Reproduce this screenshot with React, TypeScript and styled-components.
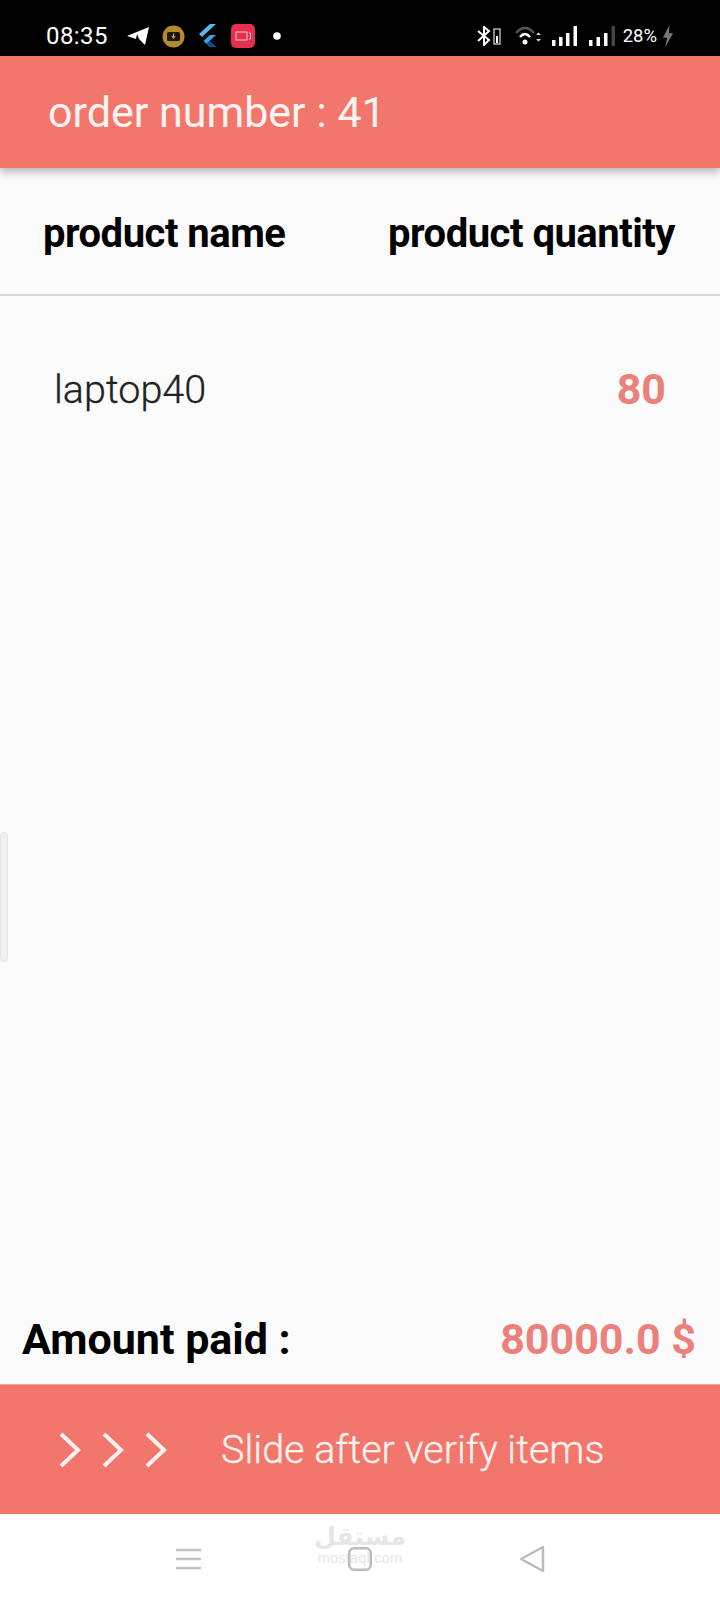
import type { FC } from 'react'
import styled, { createGlobalStyle } from 'styled-components'

const SALMON = '#f3766c'
const SALMON_TEXT = '#ec807a'

const GlobalStyle = createGlobalStyle`
  html, body {
    margin: 0;
    padding: 0;
    background: #fbfbfb;
    font-family: Roboto, "Liberation Sans", sans-serif;
  }
`

const Screen = styled.div`
  position: relative;
  width: 720px;
  height: 1600px;
  display: flex;
  flex-direction: column;
  overflow: hidden;
  background: #fbfbfb;
`

// ─── Status bar ───────────────────────────────────────────────────────────────

const StatusBar = styled.div`
  height: 56px;
  flex: none;
  background: #000;
  display: flex;
  align-items: center;
  justify-content: space-between;
  padding: 16px 46px 0 46px;
  box-sizing: border-box;
  color: #fff;
`

const StatusGroup = styled.div`
  display: flex;
  align-items: center;
`

const Clock = styled.span`
  font-size: 24px;
  letter-spacing: 0.4px;
  margin-right: 19px;
`

const BatteryText = styled.span`
  font-size: 18.5px;
  margin: 0 5px 0 0;
`

const NotifIcon = styled.svg<{ $gap?: number }>`
  display: block;
  flex: none;
  margin-right: ${({ $gap }) => $gap ?? 0}px;
`

// ─── Header ───────────────────────────────────────────────────────────────────

const AppBar = styled.header`
  height: 112px;
  flex: none;
  background: ${SALMON};
  display: flex;
  align-items: center;
  padding-left: 48px;
  box-shadow: 0 4px 8px rgba(0, 0, 0, 0.28);
  position: relative;
  z-index: 1;
`

const AppBarTitle = styled.h1`
  margin: 0;
  font-size: 43px;
  font-weight: 400;
  color: #fff4f2;
`

// ─── Table ────────────────────────────────────────────────────────────────────

const TableHead = styled.div`
  height: 128px;
  flex: none;
  display: flex;
  align-items: center;
  justify-content: space-between;
  padding: 4px 45px 0 43px;
  border-bottom: 2px solid #d6d6d6;
  box-sizing: border-box;
`

const HeadCell = styled.span`
  font-size: 40px;
  font-weight: 700;
  letter-spacing: -0.5px;
  color: #000;
`

const ItemRow = styled.div`
  flex: none;
  display: flex;
  align-items: center;
  justify-content: space-between;
  padding: 68px 54px 0 54px;
`

const ItemName = styled.span`
  font-size: 39.5px;
  font-weight: 300;
  color: #222;
  -webkit-text-stroke: 0.3px #222;
`

const ItemQty = styled.span`
  font-size: 43px;
  font-weight: 700;
  color: ${SALMON_TEXT};
`

const Spacer = styled.div`
  flex: 1;
`

// ─── Footer ───────────────────────────────────────────────────────────────────

const AmountRow = styled.div`
  height: 86px;
  flex: none;
  display: flex;
  align-items: center;
  justify-content: space-between;
  padding: 0 24px 4px 22px;
  box-sizing: border-box;
`

const AmountLabel = styled.span`
  font-size: 43px;
  font-weight: 700;
  color: #000;
`

const AmountValue = styled.span`
  font-size: 43px;
  font-weight: 700;
  color: ${SALMON_TEXT};
`

const SlideBar = styled.div`
  height: 130px;
  flex: none;
  background: ${SALMON};
  border-top: 1px solid #f3a7a1;
  box-sizing: border-box;
  display: flex;
  align-items: center;
  padding-left: 58px;
`

const Chevrons = styled.div`
  display: flex;
  gap: 19px;
  margin-right: 53px;
`

const SlideText = styled.span`
  font-size: 39.5px;
  font-weight: 300;
  color: #fff4f2;
  -webkit-text-stroke: 0.3px #fff4f2;
`

// ─── Navigation bar ───────────────────────────────────────────────────────────

const NavBar = styled.nav`
  position: relative;
  height: 86px;
  flex: none;
  background: #fff;
  display: flex;
  align-items: center;
  justify-content: center;
  gap: 147px;
  padding-top: 4px;
  box-sizing: border-box;
`

const Watermark = styled.div`
  position: absolute;
  left: 316px;
  top: 8px;
  width: 88px;
  display: flex;
  flex-direction: column;
  align-items: center;
  color: #e6e6e6;
  line-height: 1;
`

const WatermarkArabic = styled.span`
  font-family: "DejaVu Sans", sans-serif;
  font-size: 25px;
  font-weight: 700;
  line-height: 29px;
`

const WatermarkLatin = styled.span`
  font-family: "Liberation Sans", sans-serif;
  font-size: 14.5px;
  letter-spacing: 0.2px;
`

const NavIcon = styled.svg`
  display: block;
  position: relative;
  flex: none;
`

const SideHandle = styled.div`
  position: absolute;
  left: 0;
  top: 832px;
  width: 8px;
  height: 130px;
  background: #f1f1f1;
  border: 1px solid #e4e4e4;
  border-radius: 4px;
  box-sizing: border-box;
`

const Chevron: FC = () => (
  <svg width="24" height="38" viewBox="0 0 24 38" fill="none">
    <path d="M3 3 L20 19 L3 35" stroke="#fff4f2" strokeWidth="4" />
  </svg>
)

const App: FC = () => (
  <Screen>
    <GlobalStyle />
    <StatusBar>
      <StatusGroup>
        <Clock>08:35</Clock>
        <NotifIcon $gap={13} width="22" height="20" viewBox="0 0 22 20">
          <path d="M0 10 L22 1 L18 19 L12 13 L10 8 L9 13 Z" fill="#fff" />
        </NotifIcon>
        <NotifIcon $gap={13} width="23" height="23" viewBox="0 0 23 23">
          <circle cx="11.5" cy="11.5" r="11" fill="#b58a2a" />
          <rect x="5" y="7" width="13" height="9" rx="1.5" fill="#1c1608" />
          <path d="M11.5 8.5v4M9.8 11l1.7 2.4 1.7-2.4" stroke="#d9b45a" fill="none" />
        </NotifIcon>
        <NotifIcon $gap={13} width="20" height="24" viewBox="0 0 20 24">
          <path d="M12 0h6L4 13 1 10Z" fill="#5ab9e8" />
          <path d="M12 11h6l-6.500 6 6.500 6h-6l-6.500-6Z" fill="#3f9fdc" />
          <path d="M11.500 17l6.500 6h-6l-3.500-3.500Z" fill="#0d4f8c" />
        </NotifIcon>
        <NotifIcon $gap={18} width="24" height="24" viewBox="0 0 24 24">
          <rect width="24" height="24" rx="5" fill="#e4304e" />
          <rect x="5" y="8" width="11" height="8" fill="none" stroke="#f9c3cb" strokeWidth="1" />
          <path d="M18 9h1.500v6H18" fill="none" stroke="#f9c3cb" strokeWidth="1" />
        </NotifIcon>
        <NotifIcon width="8" height="8" viewBox="0 0 8 8">
          <circle cx="4" cy="4" r="3.800" fill="#fff" />
        </NotifIcon>
      </StatusGroup>
      <StatusGroup>
        <NotifIcon $gap={14} width="24" height="20" viewBox="0 0 24 20">
          <path d="M1 5l11 9-5 5V1l5 4L1 15" stroke="#fff" strokeWidth="2" fill="none" />
          <rect x="17" y="3" width="6" height="15" fill="none" stroke="#ddd" strokeWidth="1.200" />
          <rect x="19" y="10" width="2" height="7" fill="#fff" />
        </NotifIcon>
        <NotifIcon $gap={11} width="26" height="20" viewBox="0 0 26 20">
          <path d="M1 7 Q10 -3 19 7" stroke="#555" strokeWidth="2.500" fill="none" />
          <path d="M5 11 Q10 5 15 11" stroke="#fff" strokeWidth="2.500" fill="none" />
          <circle cx="10" cy="16" r="2.500" fill="#fff" />
          <path d="M21 9l2.500-2.500L26 9ZM21 13l2.500 2.500L26 13Z" fill="#ddd" />
        </NotifIcon>
        <NotifIcon $gap={12} width="25" height="20" viewBox="0 0 25 20">
          <rect x="0" y="14" width="3.500" height="6" fill="#fff" />
          <rect x="7" y="11" width="3.500" height="9" fill="#fff" />
          <rect x="14" y="7" width="3.500" height="13" fill="#fff" />
          <rect x="21.500" y="0" width="3.500" height="20" fill="#fff" />
        </NotifIcon>
        <NotifIcon $gap={8} width="26" height="20" viewBox="0 0 26 20">
          <rect x="0" y="14" width="3.500" height="6" fill="#fff" />
          <rect x="7.500" y="11" width="3.500" height="9" fill="#fff" />
          <rect x="15" y="7" width="3.500" height="13" fill="#fff" />
          <rect x="22.500" y="0" width="3.500" height="20" fill="#444" />
        </NotifIcon>
        <BatteryText>28%</BatteryText>
        <NotifIcon width="12" height="22" viewBox="0 0 13 24">
          <path d="M8 0L1 14h4.500L3.500 24 12 9H7.500Z" fill="#777" />
        </NotifIcon>
      </StatusGroup>
    </StatusBar>

    <AppBar>
      <AppBarTitle>order number : 41</AppBarTitle>
    </AppBar>

    <TableHead>
      <HeadCell>product name</HeadCell>
      <HeadCell>product quantity</HeadCell>
    </TableHead>

    <ItemRow>
      <ItemName>laptop40</ItemName>
      <ItemQty>80</ItemQty>
    </ItemRow>

    <Spacer />

    <AmountRow>
      <AmountLabel>Amount paid :</AmountLabel>
      <AmountValue>80000.0 $</AmountValue>
    </AmountRow>

    <SlideBar>
      <Chevrons>
        <Chevron />
        <Chevron />
        <Chevron />
      </Chevrons>
      <SlideText>Slide after verify items</SlideText>
    </SlideBar>

    <NavBar>
      <Watermark>
        <WatermarkArabic>مستقل</WatermarkArabic>
        <WatermarkLatin>mostaql.com</WatermarkLatin>
      </Watermark>
      <NavIcon width="25" height="22" viewBox="0 0 25 22">
        <path d="M0 2h25M0 11h25M0 20h25" stroke="#c2c2c2" strokeWidth="2.500" />
      </NavIcon>
      <NavIcon width="24" height="24" viewBox="0 0 24 24">
        <rect x="1.250" y="1.250" width="21.500" height="21.500" rx="5" fill="none" stroke="#bcbcbc" strokeWidth="2.500" />
      </NavIcon>
      <NavIcon width="26" height="28" viewBox="0 0 26 28">
        <path d="M24 2 L2 14 L24 26 Z" fill="none" stroke="#bcbcbc" strokeWidth="2.500" strokeLinejoin="round" />
      </NavIcon>
    </NavBar>

    <SideHandle />
  </Screen>
)

export default App
